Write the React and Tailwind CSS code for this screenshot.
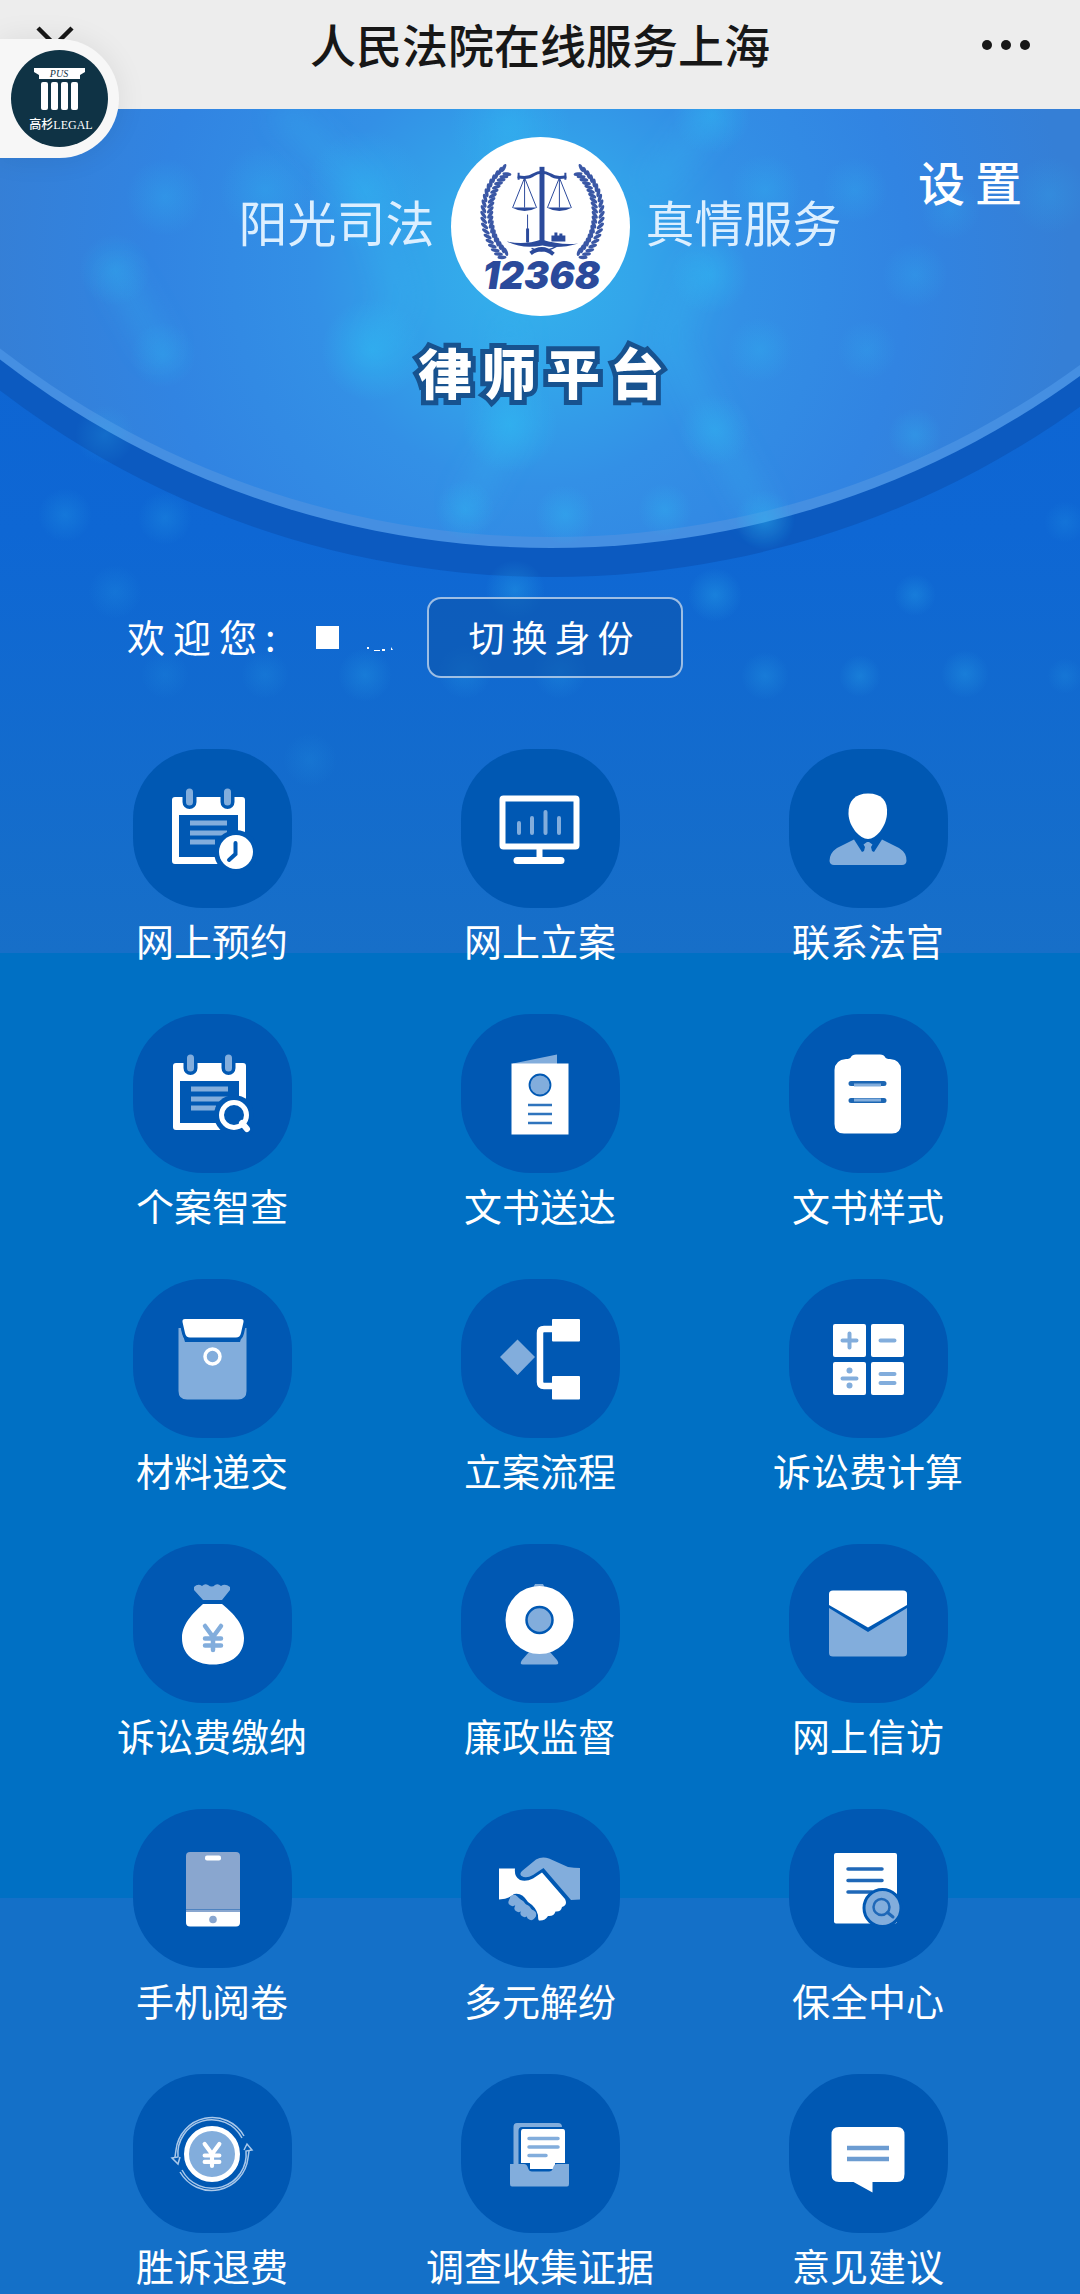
import clsx from "clsx";

const L = "#82addc";
const D = "#0058b3";
const W = "#ffffff";

/* -----------------------------------------
   Menu icons (80 x 80 grid)
----------------------------------------- */
const Yen = ({ color, x, y, s = 1 }) => (
  <path
    d="M-8 -12 L0 -1 L8 -12 M-8 0.500 H8 M-8 7.500 H8 M0 -1 V12"
    transform={`translate(${x} ${y}) scale(${s})`}
    fill="none"
    stroke={color}
    strokeWidth="4.500"
    strokeLinecap="round"
    strokeLinejoin="round"
  />
);

const Calendar = () => (
  <>
    <path
      fill={W}
      fillRule="evenodd"
      d="M3 8 H70 Q73 8 73 11 V72 Q73 75 70 75 H3 Q0 75 0 72 V11 Q0 8 3 8 Z M7 26 V68 H66 V26 Z"
    />
    <g stroke={D} strokeWidth="14" strokeLinecap="round">
      <path d="M17.5 3 V13 M55.5 3 V13" />
    </g>
    <g stroke={L} strokeWidth="7" strokeLinecap="round">
      <path d="M17.5 3 V13 M55.5 3 V13" />
    </g>
    <g stroke={L} strokeWidth="5">
      <path d="M18 34 H55 M18 44 H55 M18 53 H43" />
    </g>
  </>
);

const icons = {
  booking: (
    <>
      <Calendar />
      <circle cx="64" cy="63" r="22" fill={D} />
      <circle cx="64" cy="63" r="17" fill={W} />
      <path d="M63.5 54 V65 L57 71" fill="none" stroke={D} strokeWidth="4" strokeLinecap="round" />
    </>
  ),
  monitor: (
    <>
      <rect x="2.5" y="9.500" width="74" height="48" rx="1" fill="none" stroke={W} strokeWidth="6" />
      <path d="M39.500 60 V70" stroke={W} strokeWidth="6" />
      <path d="M17 71.500 H61" stroke={W} strokeWidth="7" strokeLinecap="round" />
      <path
        d="M19 34 V44 M32 29 V44 M45.500 23 V44 M59 29 V44"
        stroke={L}
        strokeWidth="4"
        strokeLinecap="round"
      />
    </>
  ),
  judge: (
    <>
      <path fill={W} d="M40 4.500 C54 4.500 60 12 59 25 C58 38 48 50 40 50 C32 50 21 38 20.500 25 C20 12 27 4.500 40 4.500 Z" />
      <path
        fill={L}
        d="M26 50.500 L34 63 L36 62 L37 58 L35.500 55.500 L39 53 H41 L44.500 55.500 L43 58 L44 62 L46 63 L54 50.500 L71 59 Q79 64 78.500 72 Q78 76 74 76 H6 Q2 76 1.500 72 Q1.500 64 9 59 Z"
      />
    </>
  ),
  search: (
    <>
      <g transform="translate(1 1)">
        <Calendar />
      </g>
      <circle cx="62" cy="61" r="20" fill={D} />
      <path d="M69 70 L75 76" stroke={D} strokeWidth="12" strokeLinecap="round" />
      <circle cx="62" cy="61" r="12.500" fill="none" stroke={W} strokeWidth="5" />
      <path d="M70 69 L75 75" stroke={W} strokeWidth="6" strokeLinecap="round" />
    </>
  ),
  delivery: (
    <>
      <path fill={L} d="M13 9.500 L57 0.500 V10 H13 Z" />
      <rect x="11.500" y="9.500" width="57" height="71" fill={W} />
      <circle cx="40" cy="31" r="10.500" fill={L} stroke={D} strokeWidth="1.800" />
      <path d="M28 51 H52 M28 60 H52 M28 69 H52" stroke="#2f74bd" strokeWidth="2.500" />
    </>
  ),
  template: (
    <>
      <path
        fill={W}
        d="M18 5 Q22 5 23 3 Q24 0.500 28 0.500 H52 Q56 0.500 57 3 Q58 5 62 5 Q73 6 73 16 V70 Q73 79.500 64 79.500 H16 Q6.500 79.500 6.500 70 V16 Q7 6 18 5 Z"
      />
      <path d="M23 29.500 H56 M23 46.500 H56" stroke="#1c66b3" strokeWidth="5" strokeLinecap="round" />
      <path d="M26 31 H53 M26 46 H53" stroke={L} strokeWidth="3" />
    </>
  ),
  submit: (
    <>
      <path fill={L} d="M6.500 9 L9 9 L13 23 H68 L72 9 H74.500 V72 Q74.500 80.500 66 80.500 H15 Q6.500 80.500 6.500 72 Z" />
      <path
        fill={W}
        stroke={D}
        strokeWidth="6"
        paintOrder="stroke"
        d="M13 0 H69 Q72 0 71.500 3 L69 14 Q68 18.500 64 18.500 H18 Q14 18.500 13 14 L10.500 3 Q10 0 13 0 Z"
      />
      <circle cx="40.500" cy="37.500" r="7.500" fill="none" stroke={W} strokeWidth="3.500" />
    </>
  ),
  flow: (
    <>
      <path fill={L} d="M17.500 20.500 L35 38 L17.500 56 L0 38 Z" />
      <path d="M55 10 H44 Q40 10 40 14 V63 Q40 67 44 67 H55" fill="none" stroke={W} strokeWidth="6.500" />
      <rect x="52" y="0" width="28" height="22.500" rx="1" fill={W} />
      <rect x="52" y="57" width="28" height="23.500" rx="1" fill={W} />
    </>
  ),
  calculator: (
    <>
      <g fill={W}>
        <rect x="5" y="5" width="33" height="33" rx="2" />
        <rect x="43" y="5" width="33" height="33" rx="2" />
        <rect x="5" y="43" width="33" height="33" rx="2" />
        <rect x="43" y="43" width="33" height="33" rx="2" />
      </g>
      <path
        d="M14.500 21.500 H28.500 M21.500 14.500 V28.500 M52.500 21.500 H66.500 M14.500 59.500 H28.500 M52.500 55 H66.500 M52.500 64 H66.500"
        stroke={L}
        strokeWidth="4"
        strokeLinecap="round"
      />
      <circle cx="21.500" cy="51.500" r="3" fill={L} />
      <circle cx="21.500" cy="66.500" r="3" fill={L} />
    </>
  ),
  payment: (
    <>
      <path
        fill={L}
        d="M22 3 Q26 -1 30 2 Q33 -1 36 1 Q40 4 43 1 Q46 -1 49 2 Q53 -1 58 3 V6 L50 16 H31 L22 6 Z"
      />
      <path fill={W} d="M31 20 H50 C58 27 72 38 72 54 C72 70 60 80.500 41 80.500 C22 80.500 10 70 10 54 C10 38 24 27 31 20 Z" />
      <Yen color={L} x="41" y="54" />
    </>
  ),
  camera: (
    <>
      <path fill={L} d="M33 4 L35 0 H43 L45 4 Z M29 68 H50 L57 76 Q60 80.500 56 80.500 H23 Q19 80.500 22 76 Z" />
      <circle cx="39.500" cy="36" r="34" fill={W} />
      <circle cx="39.500" cy="36" r="13" fill={L} stroke={D} strokeWidth="2.500" />
    </>
  ),
  mail: (
    <>
      <path fill={L} d="M1 24 L40 48 L79 24 V69 Q79 72.500 75 72.500 H5 Q1 72.500 1 69 Z" />
      <path fill={W} d="M1 21 V10 Q1 6.500 5 6.500 H75 Q79 6.500 79 10 V21 L40 43.500 Z" />
    </>
  ),
  phone: (
    <>
      <rect x="14" y="3" width="54" height="74" rx="4" fill="#89a6cf" />
      <path fill={W} d="M14 63 H68 V73 Q68 77.500 64 77.500 H18 Q14 77.500 14 73 Z" />
      <path d="M14 60.500 H68" stroke="#4f83c0" strokeWidth="1" />
      <rect x="33" y="6.500" width="16" height="5" rx="2" fill={W} />
      <circle cx="41" cy="70.500" r="3.800" fill="#89a6cf" />
    </>
  ),
  handshake: (
    <>
      <path
        fill={L}
        d="M22 22 L36 10.500 Q42 7 49 9.500 L68 18 Q74 19 80 19 V50.500 L71 51 L43.500 19 L33 26 Q26 30 21.500 27 Q19 25 22 22 Z"
      />
      <path
        fill={W}
        d="M-1 19.500 H15 Q14 28 20 31 Q26 33 33 29.500 L42 23.500 L65 50 Q68 56 62 58 Q61 63 55.500 62.500 Q54 67.500 48 67 Q45 72 39 71.500 Q38 71 38 66 Q36 58 28 53 Q22 43 14 45 Q9 50 -1 50.500 Z"
      />
      <g stroke={L} strokeWidth="8" strokeLinecap="round">
        <path d="M14 50 L12.500 53 M20.500 55 L18.500 59 M26.500 60 L24.500 64 M32 65 L31 67" />
        <path d="M14 50 L32 66" />
      </g>
    </>
  ),
  security: (
    <>
      <rect x="6" y="4" width="63" height="70.500" rx="2" fill={W} />
      <path d="M20 20 H54 M20 31.500 H54 M20 43 H44" stroke="#1f68b8" strokeWidth="3.500" strokeLinecap="round" />
      <circle cx="54.500" cy="59" r="18.500" fill={L} stroke={D} strokeWidth="3" />
      <circle cx="53.500" cy="58" r="8" fill="none" stroke="#1f68b8" strokeWidth="2.500" />
      <path d="M59.500 63.500 L65 68" stroke="#1f68b8" strokeWidth="3" strokeLinecap="round" />
    </>
  ),
  refund: (
    <>
      <circle cx="40" cy="40" r="25.500" fill={L} stroke={W} strokeWidth="5" />
      <Yen color={W} x="40" y="41" s={0.92} />
      <g fill="none" stroke="#a9c8ea" strokeWidth="1.500">
        <path d="M70 24 A34 34 0 0 0 6 43 L0 44 L6 50 L8 43" />
        <path d="M72 22 A36.500 36.500 0 0 0 4 36 L3 43" />
        <path d="M10 56 A34 34 0 0 0 74 37 L80 36 L75 30 L72 36" />
        <path d="M8 58 A36.500 36.500 0 0 0 76 44 L77 37" />
      </g>
    </>
  ),
  evidence: (
    <>
      <path fill={L} d="M17 9 H58 Q62 9 62 13 H22 Q18.500 13 18.500 17 V50 H13.500 V13 Q13.500 9 17 9 Z" />
      <path fill={W} d="M23 15 H63 Q65 15 65 18 V49 H55 V55 H30 V49 H21 V18 Q21 15 23 15 Z" />
      <path fill={L} d="M10 50 H24 Q27 50 28 54 Q29 57.500 32 57.500 H49 Q52 57.500 53 54 Q54 50 57 50 H69 V70 Q69 72.500 67 72.500 H12 Q10 72.500 10 70 Z" />
      <path d="M29 24.500 H58 M29 33 H58 M29 41.500 H46" stroke={L} strokeWidth="3.500" strokeLinecap="round" />
    </>
  ),
  feedback: (
    <>
      <path
        fill={W}
        d="M11 13 H69 Q76.500 13 76.500 21 V60 Q76.500 68 69 68 H44.500 V78.500 L25.500 68 H11 Q3.500 68 3.500 60 V21 Q3.500 13 11 13 Z"
      />
      <path d="M19 34 H61 M19 45 H61" stroke="#6c9cd1" strokeWidth="4.500" />
    </>
  ),
};

const menu = [
  { icon: "booking", label: "网上预约" },
  { icon: "monitor", label: "网上立案" },
  { icon: "judge", label: "联系法官" },
  { icon: "search", label: "个案智查" },
  { icon: "delivery", label: "文书送达" },
  { icon: "template", label: "文书样式" },
  { icon: "submit", label: "材料递交" },
  { icon: "flow", label: "立案流程" },
  { icon: "calculator", label: "诉讼费计算" },
  { icon: "payment", label: "诉讼费缴纳" },
  { icon: "camera", label: "廉政监督" },
  { icon: "mail", label: "网上信访" },
  { icon: "phone", label: "手机阅卷" },
  { icon: "handshake", label: "多元解纷" },
  { icon: "security", label: "保全中心" },
  { icon: "refund", label: "胜诉退费" },
  { icon: "evidence", label: "调查收集证据" },
  { icon: "feedback", label: "意见建议" },
];

/* -----------------------------------------
   Court emblem
----------------------------------------- */
const leaves = Array.from({ length: 20 }, (_, i) => {
  const deg = 118 + i * 6.2;
  const a = (deg * Math.PI) / 180;
  return { x: 73 + 37 * Math.cos(a), y: 77 - 49 * Math.sin(a), r: 90 - deg };
});

const Laurel = () => (
  <g fill="#3a57a5">
    {leaves.map((l, i) => (
      <g key={i} transform={`translate(${l.x} ${l.y}) rotate(${l.r})`}>
        <ellipse cx="1" cy="-3.500" rx="4.500" ry="1.800" transform="rotate(-35)" />
        <ellipse cx="1" cy="3.500" rx="4.500" ry="1.800" transform="rotate(35)" />
      </g>
    ))}
  </g>
);

const Emblem = () => (
  <svg viewBox="0 0 180 180" className="size-[179px] shrink-0" role="img" aria-label="12368">
    <circle cx="90" cy="90" r="90" fill="#fff" />
    <Laurel />
    <g transform="translate(184 0) scale(-1 1)">
      <Laurel />
    </g>
    <g fill="none" stroke="#2b4a9b">
      <path d="M91.500 30 V107" strokeWidth="5" />
      <path d="M67 40 Q78 42 83 38 Q91 33 100 38 Q105 42 116 40" strokeWidth="3" />
      <path d="M68 36 V43 M115 36 V43" strokeWidth="2" />
      <path d="M74 41 L62 71 M74 41 V71 M74 41 L86 71 M109 41 L97 71 M109 41 V71 M109 41 L121 71" strokeWidth="1" />
      <path d="M77 78 V106" strokeWidth="1" />
      <path d="M77 92 V106" strokeWidth="3" />
      <path d="M80 117 Q92 108 103 118" strokeWidth="4" />
      <path d="M81 112 Q92 118 106 110" strokeWidth="1.500" />
    </g>
    <g fill="#2b4a9b">
      <path d="M61 71 H87 Q74 78 61 71 Z M96 71 H122 Q109 78 96 71 Z" />
      <path d="M56 105 Q74 109 91 103 Q110 109 128 107 Q108 113 92 109 Q72 113 56 105 Z" />
      <path d="M101 105 V99 H104 V96 H107 V99 H109 V97 H112 V99 H115 V105 Z" />
    </g>
    <text
      x="91"
      y="153"
      textAnchor="middle"
      fill="#2b4a9b"
      className="font-['Inter',sans-serif] text-[38px] font-black italic"
    >
      12368
    </text>
  </svg>
);

/* -----------------------------------------
   Hero backdrop
----------------------------------------- */
// x, y, radius, opacity
const glows = [
  [165, 197, 26, 0.3], [115, 270, 24, 0.32], [265, 190, 30, 0.3], [365, 190, 40, 0.4],
  [510, 125, 40, 0.4], [712, 115, 26, 0.45], [765, 190, 24, 0.3], [855, 190, 22, 0.25],
  [950, 210, 20, 0.2], [1050, 195, 26, 0.2], [710, 275, 26, 0.45], [915, 275, 22, 0.25],
  [163, 355, 22, 0.3], [372, 350, 34, 0.6], [760, 350, 22, 0.3], [867, 350, 20, 0.22],
  [510, 425, 32, 0.6], [715, 430, 24, 0.4], [915, 435, 18, 0.3], [105, 435, 20, 0.2],
  [465, 510, 20, 0.4], [565, 515, 20, 0.4], [665, 510, 18, 0.35], [765, 520, 20, 0.4],
  [65, 515, 18, 0.2], [165, 518, 18, 0.2], [115, 592, 18, 0.15], [515, 590, 20, 0.3],
  [715, 595, 18, 0.3], [915, 595, 14, 0.25], [1065, 522, 14, 0.15], [165, 675, 16, 0.12],
  [265, 675, 16, 0.15], [365, 675, 18, 0.22], [465, 672, 18, 0.2], [560, 672, 18, 0.2],
  [765, 676, 16, 0.22], [860, 676, 14, 0.25], [965, 674, 16, 0.25], [1065, 676, 12, 0.15],
  [310, 760, 18, 0.12],
];

const Backdrop = () => (
  <svg
    viewBox="0 109 1080 844"
    preserveAspectRatio="xMidYMin slice"
    className="absolute inset-x-0 top-0 h-[844px] w-full"
    aria-hidden="true"
  >
    <defs>
      <linearGradient id="sky" x1="0" y1="0" x2="0" y2="1">
        <stop offset="0" stopColor="#0d62d0" />
        <stop offset="0.500" stopColor="#0e67d4" />
        <stop offset="1" stopColor="#176fc8" />
      </linearGradient>
      <radialGradient id="disc" gradientUnits="userSpaceOnUse" cx="530" cy="270" r="540">
        <stop offset="0" stopColor="#34b2ec" />
        <stop offset="0.200" stopColor="#33a5ea" />
        <stop offset="0.400" stopColor="#3390e6" />
        <stop offset="0.700" stopColor="#3184e2" />
        <stop offset="1" stopColor="#357fd6" />
      </radialGradient>
      <radialGradient id="glow">
        <stop offset="0" stopColor="#2fb8f2" />
        <stop offset="0.500" stopColor="#2fb8f2" stopOpacity="0.500" />
        <stop offset="1" stopColor="#2fb8f2" stopOpacity="0" />
      </radialGradient>
      <filter id="soft" x="-20%" y="-20%" width="140%" height="140%">
        <feGaussianBlur stdDeviation="14" />
      </filter>
    </defs>
    <rect y="109" width="1080" height="844" fill="url(#sky)" />
    <circle cx="551" cy="-330" r="907" fill="#0c5ac0" />
    <circle cx="551" cy="-352" r="900" fill="#458fe2" />
    <circle cx="551" cy="-363" r="900" fill="url(#disc)" />
    <g filter="url(#soft)" fill="none" stroke="#36b6f0" strokeWidth="22" opacity="0.300">
      <path d="M510 109 V180 M510 320 V430 L465 510" />
      <path d="M712 115 L650 190 M700 260 L670 340 L715 430 L765 520" />
      <path d="M280 110 L365 190 L400 300 L372 350" />
      <path d="M115 270 L163 355" />
    </g>
    {glows.map(([x, y, r, o]) => (
      <circle key={`${x}-${y}`} cx={x} cy={y} r={r * 1.5} fill="url(#glow)" opacity={o} />
    ))}
  </svg>
);

const FloatingBadge = () => (
  <button
    type="button"
    aria-label="高杉LEGAL"
    className="absolute top-[39px] left-0 z-10 flex h-[119px] w-[119px] items-center justify-end rounded-r-full bg-[#f7f7f7] pr-[11px] shadow-[0_0_30px_rgba(0,0,0,0.08)]"
  >
    <svg viewBox="0 0 97 97" className="size-[97px]">
      <circle cx="48.500" cy="48.500" r="48.500" fill="#0f3345" />
      <path fill="#fff" d="M23 18 H74 V22 L69 25 V29 H28 V25 L23 22 Z" />
      <g fill="#fff">
        <rect x="30" y="32" width="7" height="28" rx="2" />
        <rect x="40" y="32" width="7" height="28" rx="2" />
        <rect x="50" y="32" width="7" height="28" rx="2" />
        <rect x="60" y="32" width="7" height="28" rx="2" />
      </g>
      <text x="48" y="27" textAnchor="middle" fill="#0f3345" className="font-['Liberation_Serif',serif] text-[10px] italic">
        PUS
      </text>
      <text
        x="50"
        y="79"
        textAnchor="middle"
        fill="#fff"
        className="font-['Liberation_Serif','Noto_Sans_CJK_SC',serif] text-[12px] font-medium"
      >
        高杉LEGAL
      </text>
    </svg>
  </button>
);

const MenuItem = ({ icon, label }) => (
  <a href="#" className="flex flex-col items-center gap-1">
    <span className="flex size-[159px] items-center justify-center rounded-[70px] bg-[#0058b3]">
      <svg viewBox="0 0 80 80" className="size-20 overflow-visible" aria-hidden="true">
        {icons[icon]}
      </svg>
    </span>
    <span className="text-[38px] leading-[56px] whitespace-nowrap">{label}</span>
  </a>
);

const slogan = "pb-3 text-[49px] leading-[64px] text-[#dcefff] whitespace-nowrap";

export default function App() {
  return (
    <div className="relative min-h-screen overflow-hidden bg-[#1470c8] font-['Noto_Sans_CJK_SC',sans-serif] text-white">
      {/* Title bar */}
      <header className="grid h-[109px] grid-cols-[1fr_auto_1fr] items-center bg-[#ededed] px-9 pb-5 text-[#171717]">
        <button type="button" aria-label="关闭" className="justify-self-start">
          <svg viewBox="0 0 38 38" className="size-[38px]" fill="none" stroke="currentColor" strokeWidth="4.500">
            <path d="M2 2 L36 36 M36 2 L2 36" />
          </svg>
        </button>
        <h1 className="pb-1 text-[46px] leading-[64px] font-medium">人民法院在线服务上海</h1>
        <button type="button" aria-label="更多" className="justify-self-end pr-3">
          <svg viewBox="0 0 50 10" className="h-[10px] w-[50px]" fill="currentColor">
            <circle cx="5" cy="5" r="5" />
            <circle cx="24" cy="5" r="5" />
            <circle cx="43" cy="5" r="5" />
          </svg>
        </button>
      </header>

      <FloatingBadge />

      <main className="relative bg-[linear-gradient(#0070c4_1789px,#1470c8_1789px)]">
        <Backdrop />

        <div className="relative">
          {/* Slogan + emblem */}
          <div className="grid grid-cols-[1fr_auto_1fr] items-center gap-4 pt-7">
            <p className={clsx(slogan, "text-right")}>阳光司法</p>
            <Emblem />
            <div className="flex h-full items-center justify-between pr-12">
              <p className={slogan}>真情服务</p>
              <button type="button" className="mt-3 self-start text-[47px] leading-[64px] font-medium tracking-[10px]">
                设置
              </button>
            </div>
          </div>

          <h2 className="mt-6 pl-3 text-center text-[54px] leading-[64px] font-black tracking-[10px] [-webkit-text-stroke:10px_#17528f] [paint-order:stroke_fill]">
            律师平台
          </h2>

          {/* Current user */}
          <div className="mt-[193px] flex h-[81px] items-center pl-[127px]">
            <p className="pb-1 text-[38px] leading-[56px] tracking-[8px]">欢迎您:</p>
            <span className="ml-8 size-[23px] bg-white" />
            <svg viewBox="0 0 28 6" className="ml-7 h-[6px] w-7 overflow-visible" fill="#fff" aria-hidden="true">
              <path d="M0 12 h2 v2 h-2 z M7 15 h6 v1 h-6 z M15 14 h3 v2 h-3 z M24 12 l2 3 h-2 z" />
            </svg>
            <button
              type="button"
              className="ml-8 h-full rounded-[14px] border-2 border-white/60 bg-[#0c55ac]/60 px-10 pb-1 text-[36px] leading-[56px] tracking-[7px]"
            >
              切换身份
            </button>
          </div>

          {/* Services */}
          <nav className="mt-[71px] grid grid-cols-3 gap-y-[46px] px-12">
            {menu.map((item) => (
              <MenuItem key={item.icon} {...item} />
            ))}
          </nav>
        </div>
      </main>
    </div>
  );
}
